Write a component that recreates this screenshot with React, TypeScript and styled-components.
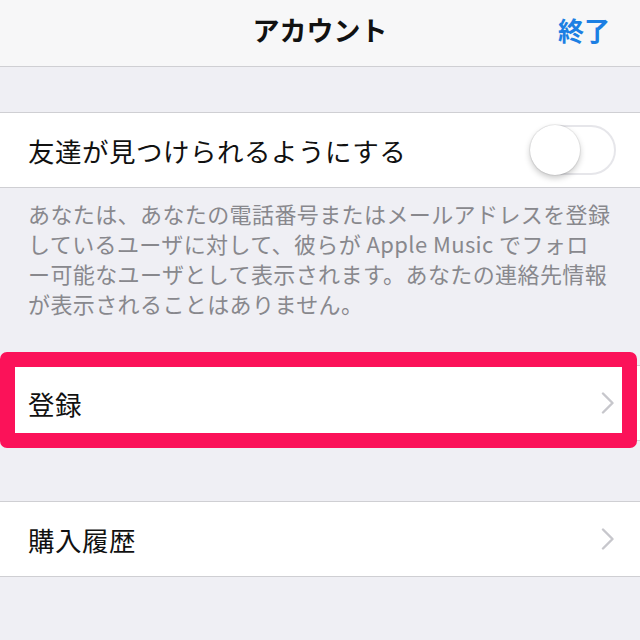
import React from "react";
import styled, { createGlobalStyle } from "styled-components";

const Global = createGlobalStyle`
  html, body { margin: 0; padding: 0; background: #efeff4; }
  body { font-family: "Noto Sans CJK JP", "Noto Sans", sans-serif; }
`;

const Screen = styled.div`
  width: 640px;
  height: 640px;
  overflow: hidden;
  background: #efeff4;
  display: flex;
  flex-direction: column;
`;

const NavBar = styled.header`
  height: 67px;
  box-sizing: border-box;
  background: #f7f7f8;
  border-bottom: 1px solid #cfcfd3;
  display: grid;
  grid-template-columns: 1fr auto 1fr;
  align-items: center;
  padding: 0 28px 8px 28px;
`;

const Title = styled.h1`
  grid-column: 2;
  margin: 0;
  font-size: 27px;
  font-weight: 700;
  color: #111;
`;

const Done = styled.span`
  grid-column: 3;
  justify-self: end;
  font-size: 26px;
  font-weight: 700;
  color: #1c7fe3;
  margin-right: 2px;
`;

const Spacer = styled.div<{ h: number }>`
  height: ${(p) => p.h}px;
  flex: none;
`;

const Group = styled.section`
  position: relative;
  background: #fff;
  border-top: 1px solid #cfcfd3;
  border-bottom: 1px solid #cfcfd3;
`;

const Row = styled.div`
  height: 74px;
  display: flex;
  align-items: center;
  justify-content: space-between;
  padding: 0 25px 0 28px;
`;

const Label = styled.span`
  font-size: 26.5px;
  color: #111;
  letter-spacing: 0.5px;
`;

const Footer = styled.p`
  margin: 0;
  padding: 10px 20px 47px 28px;
  font-size: 22px;
  line-height: 30px;
  color: #88888d;
  letter-spacing: 0.4px;
  white-space: nowrap;
`;

const Track = styled.div`
  width: 86px;
  height: 50px;
  box-sizing: border-box;
  border-radius: 25px;
  border: 2px solid #e6e6ea;
  background: #fff;
  position: relative;
  margin-right: -1px;
`;

const Knob = styled.div`
  position: absolute;
  left: -2px;
  top: -2px;
  width: 50px;
  height: 50px;
  border-radius: 50%;
  background: #fff;
  box-shadow: 0 3px 6px rgba(0, 0, 0, 0.22), 0 0 0 1px rgba(0, 0, 0, 0.06);
`;

const Highlight = styled.div`
  position: absolute;
  left: 0;
  right: 3px;
  top: -14px;
  bottom: -8px;
  border: 15px solid #fb1259;
  border-radius: 7px;
  pointer-events: none;
`;

const Chevron = () => (
  <svg width="14" height="22" viewBox="0 0 14 22" fill="none">
    <path d="M2 1.5 L11.5 11 L2 20.5" stroke="#c7c7cc" strokeWidth="2.4" strokeLinecap="round" strokeLinejoin="round" />
  </svg>
);

export default function App() {
  return (
    <Screen>
      <Global />
      <NavBar>
        <Title>アカウント</Title>
        <Done>終了</Done>
      </NavBar>
      <Spacer h={45} />
      <Group>
        <Row>
          <Label>友達が見つけられるようにする</Label>
          <Track>
            <Knob />
          </Track>
        </Row>
      </Group>
      <Footer>
        あなたは、あなたの電話番号またはメールアドレスを登録
        <br />
        しているユーザに対して、彼らが Apple Music でフォロ
        <br />
        ー可能なユーザとして表示されます。あなたの連絡先情報
        <br />
        が表示されることはありません。
      </Footer>
      <Group>
        <Row>
          <Label>登録</Label>
          <Chevron />
        </Row>
        <Highlight />
      </Group>
      <Spacer h={60} />
      <Group>
        <Row>
          <Label>購入履歴</Label>
          <Chevron />
        </Row>
      </Group>
    </Screen>
  );
}
